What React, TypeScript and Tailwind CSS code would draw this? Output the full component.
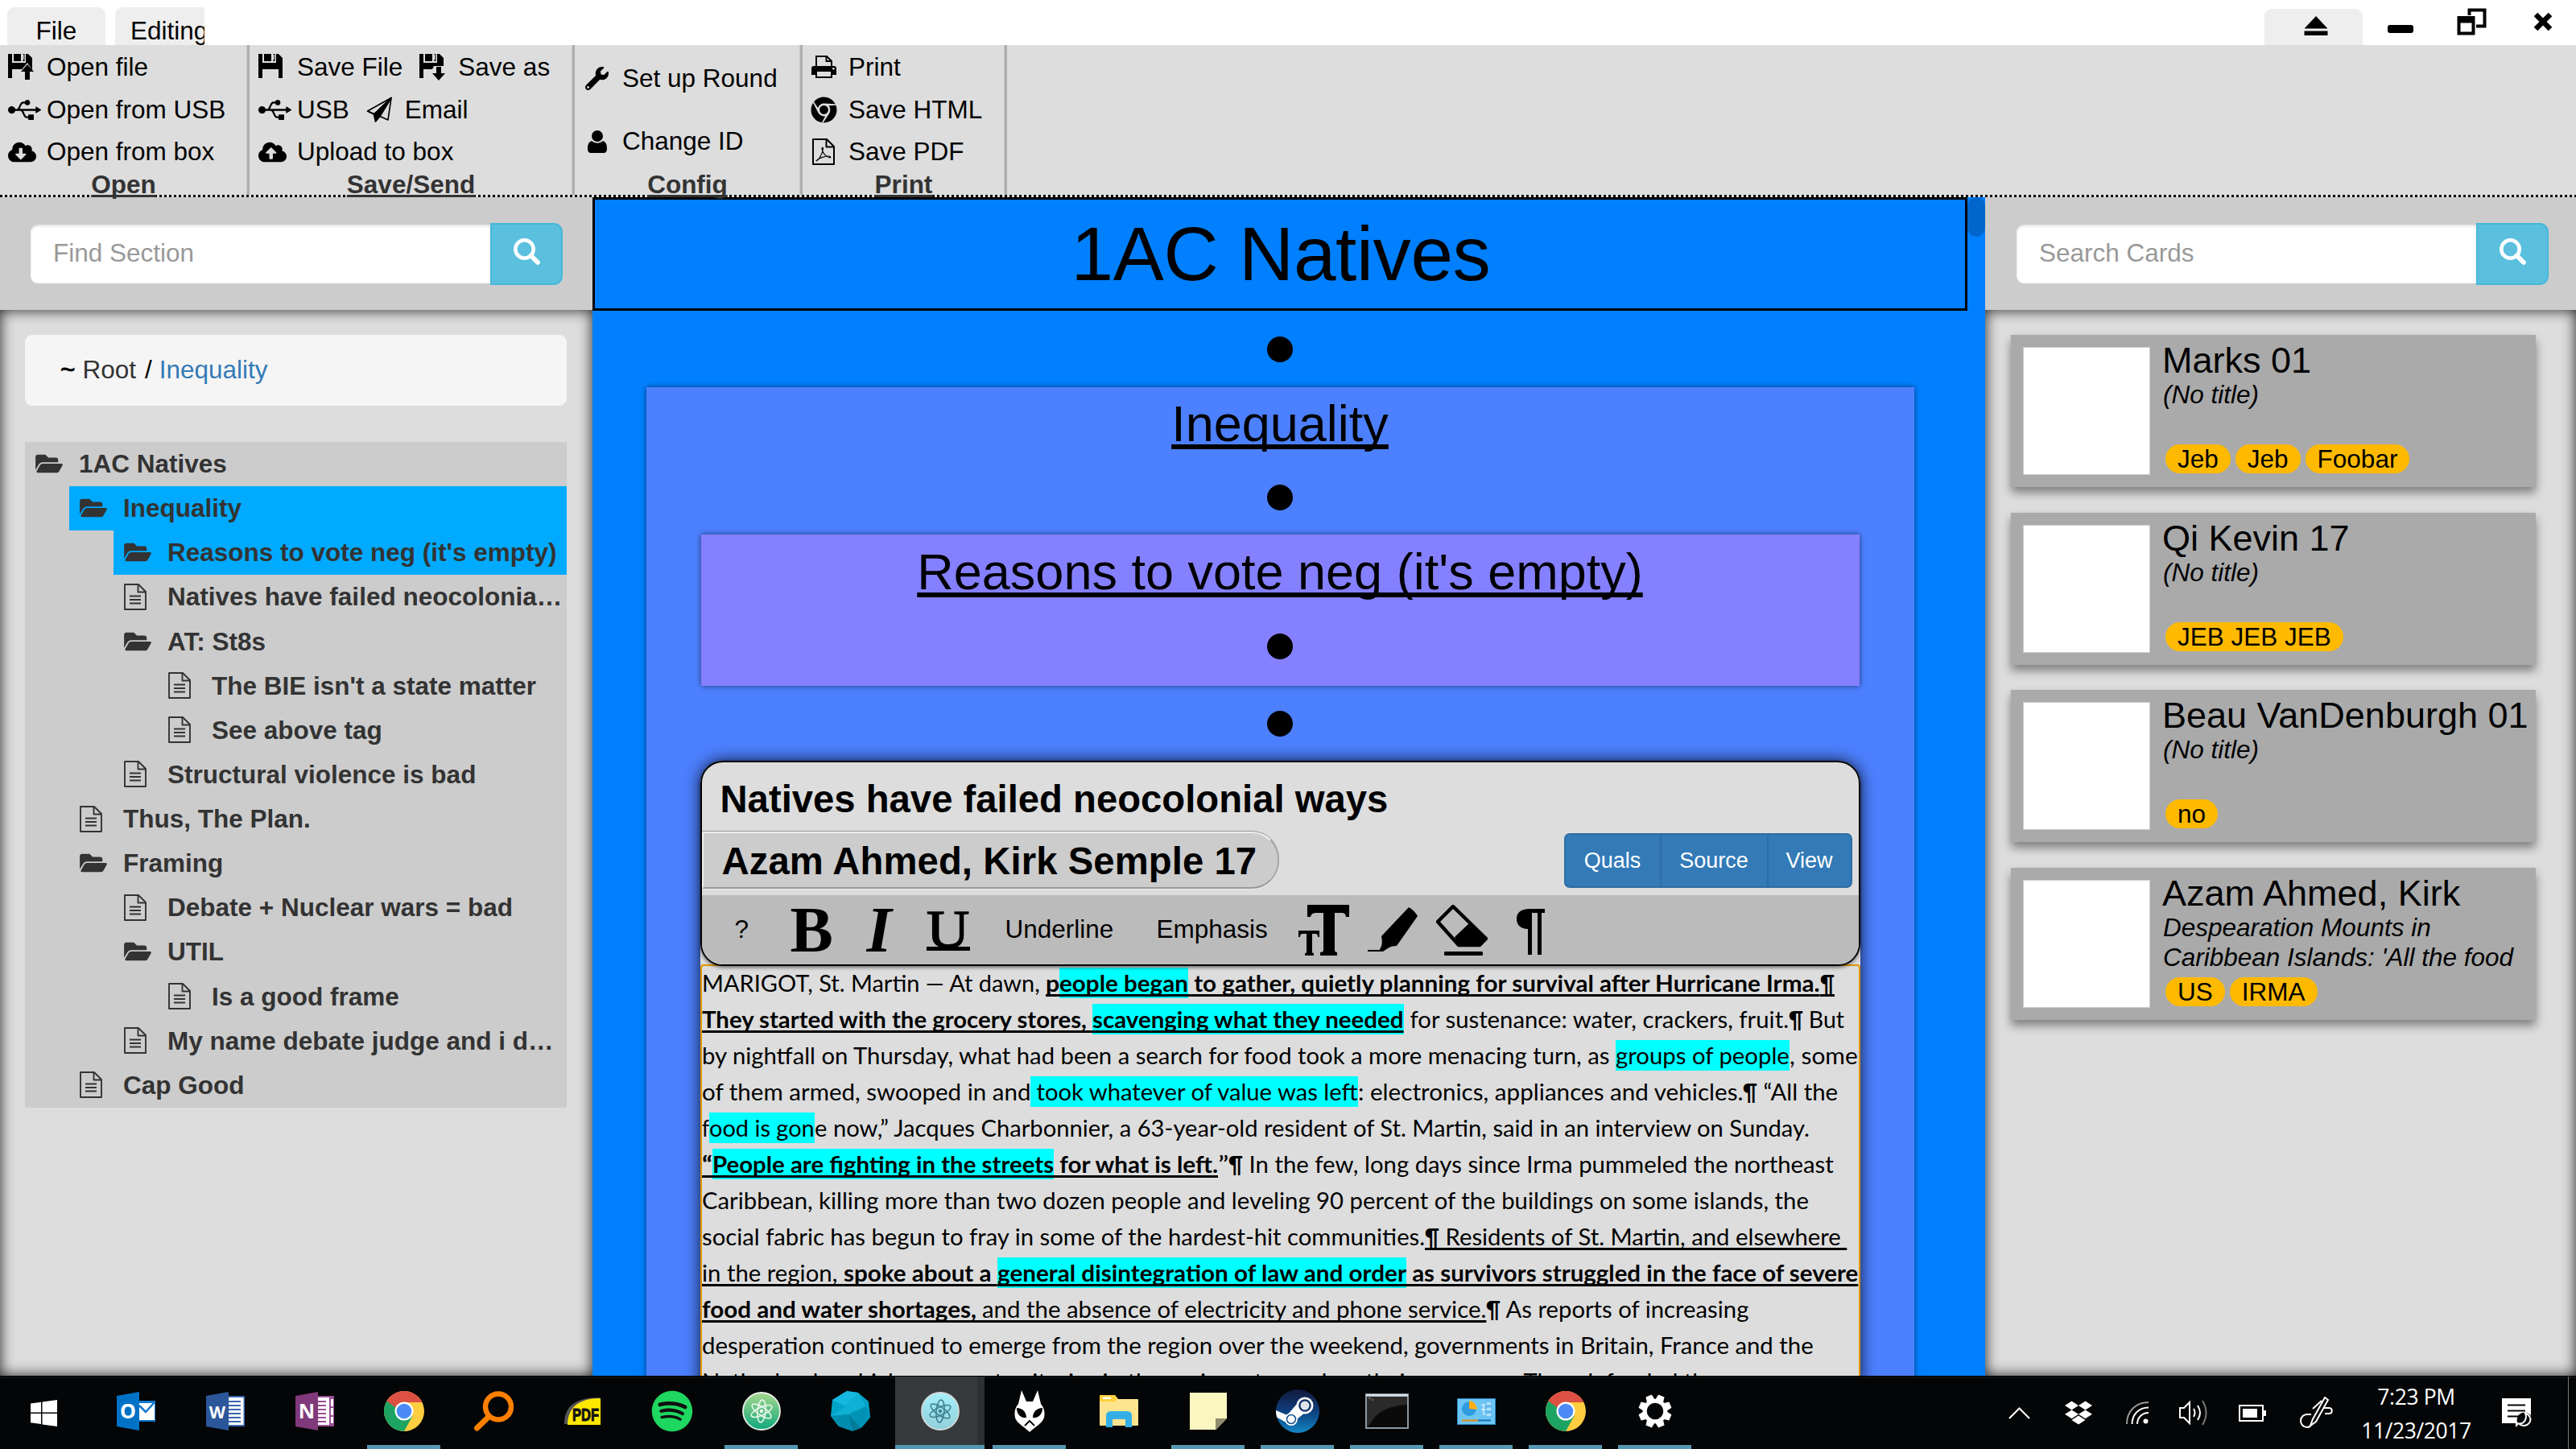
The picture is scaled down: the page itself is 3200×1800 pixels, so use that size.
import React, { useLayoutEffect, useRef, useState } from "react";
import { FaUsb, FaWrench, FaChrome, FaCloudDownloadAlt, FaCloudUploadAlt, FaFolderOpen, FaSpotify, FaDropbox } from "react-icons/fa";

/* ---------- ribbon icons ---------- */

function Floppy({ arrow }: { arrow?: "up" | "down" }) {
  return (
    <svg width="32" height="34" viewBox="0 0 32 34" fill="#000">
      <path d="M0 1h5v11h17V1h3l5 5v25h-5V20H5v11H0z" />
      <path d="M7 1h9v9H7z M18.500 1h2v9h-2z" />
      <path d="M17 2h2.500v6H17z" fill="#ddd" />
      {arrow === "up" && (
        <>
          <path d="M14 24l10-12 8 12v10H18z" fill="#ddd" />
          <path d="M24 14l8 9h-5v10h-6V23h-5z" />
        </>
      )}
      {arrow === "down" && (
        <>
          <path d="M14 24l4-8h14v16H17z" fill="#ddd" />
          <path d="M21 17h6v8h5l-8 9-8-9h5z" />
        </>
      )}
    </svg>
  );
}

function Plane() {
  return (
    <svg width="33" height="33" viewBox="0 0 33 33" fill="none" stroke="#000" strokeWidth="1.700" strokeLinejoin="round">
      <path d="M1.500 18L31 1.500 27 29l-10-4.500z" />
      <path d="M1.500 18l8 4L31 1.500" />
      <path d="M31 1.500L9.500 22l2 9 5.500-6.500z" fill="#000" />
    </svg>
  );
}

function PersonIcon() {
  return (
    <svg width="24" height="28" viewBox="0 0 24 28" fill="#000">
      <circle cx="12" cy="7" r="7" />
      <path d="M5 13c4 3.500 10 3.500 14 0 4 1.500 5 5 5 10 0 3-1.500 5-4 5H4c-2.500 0-4-2-4-5 0-5 1-8.500 5-10z" />
    </svg>
  );
}

function PrinterIcon() {
  return (
    <svg width="31" height="28" viewBox="0 0 31 28" fill="none" stroke="#000" strokeWidth="2">
      <path d="M6 14V1h13l6 6v7" />
      <path d="M18.500 1v6H25" />
      <path d="M3 13h25c2 0 3 1 3 3v8h-5v-4H5v4H0v-8c0-2 1-3 3-3z" fill="#000" stroke="none" />
      <circle cx="27.300" cy="16.300" r="1.300" fill="#ddd" stroke="none" />
      <path d="M6 20v7h19v-7" />
    </svg>
  );
}

function PdfIcon() {
  return (
    <svg width="28" height="33" viewBox="0 0 28 33" fill="none" stroke="#000" strokeWidth="2" strokeLinejoin="round">
      <path d="M1 1h17l9 9v22H1z" />
      <path d="M17.500 1v9.500H27" />
      <path d="M5 28c3-1 8-9 8.500-15.500.2-1.500-1.600-1.500-1.500.2C12.500 18 17 23 22 24c1.500-.500.500-2-1.500-2C16 22 9 24 6 27z" strokeWidth="1.200" />
    </svg>
  );
}

function DocIcon() {
  return (
    <svg width="28" height="33" viewBox="0 0 28 33" fill="none" stroke="#333" strokeWidth="1.900" strokeLinejoin="round">
      <path d="M1 1h17l9 9v22H1z" />
      <path d="M17.500 1v9.500H27" />
      <path d="M7 15.500h14M7 20h14M7 24.500h14" />
    </svg>
  );
}

function SearchIcon() {
  return (
    <svg width="33" height="33" viewBox="0 0 33 33" fill="none" stroke="#fff">
      <circle cx="13.500" cy="13.500" r="11.200" strokeWidth="4.600" />
      <path d="M21.500 21.500l8.500 8.500" strokeWidth="5.800" strokeLinecap="round" />
    </svg>
  );
}

/* ---------- ribbon ---------- */

function Item({ icon, label, iconW = "w-[48px]" }: { icon: React.ReactNode; label: string; iconW?: string }) {
  return (
    <div className="flex items-center whitespace-nowrap">
      <div className={`${iconW} flex shrink-0 items-center`}>{icon}</div>
      <span>{label}</span>
    </div>
  );
}

function Group({ label, width, children }: { label: string; width: string; children: React.ReactNode }) {
  return (
    <div className={`${width} flex h-[186px] shrink-0 flex-col border-r-[3px] border-[#afafaf] shadow-[inset_-1px_0_0_#c9c9c9]`}>
      <div className="flex h-[159px] flex-col pt-px">{children}</div>
      <div className="h-[27px] text-center font-bold leading-[29px] text-[#333] underline decoration-[3px] underline-offset-[2px] [text-decoration-skip-ink:none]">{label}</div>
    </div>
  );
}

function Row({ children, className = "" }: { children: React.ReactNode; className?: string }) {
  return <div className={`flex h-[52.5px] shrink-0 items-center ${className}`}>{children}</div>;
}

function Ribbon() {
  return (
    <div className="h-[189px] bg-[#ddd] text-[31.5px] text-black">
      <div className="relative z-10 flex h-[186px]">
        <Group label="Open" width="w-[310px]">
          <Row className="pl-[10px]"><Item icon={<Floppy arrow="up" />} label="Open file" /></Row>
          <Row className="pl-[10px] pt-px"><Item icon={<FaUsb className="h-[41px] w-[41px]" />} label="Open from USB" /></Row>
          <Row className="pl-[10px] pt-px"><Item icon={<FaCloudDownloadAlt className="h-[28px] w-[35px]" />} label="Open from box" /></Row>
        </Group>
        <Group label="Save/Send" width="w-[404px]">
          <Row className="pl-[11px]">
            <Item icon={<Floppy />} label="Save File" />
            <div className="w-[21px]" />
            <Item icon={<Floppy arrow="down" />} label="Save as" />
          </Row>
          <Row className="pl-[11px] pt-px">
            <Item icon={<FaUsb className="h-[41px] w-[41px]" />} label="USB" />
            <div className="w-[21px]" />
            <Item icon={<Plane />} label="Email" />
          </Row>
          <Row className="pl-[11px] pt-px"><Item icon={<FaCloudUploadAlt className="h-[28px] w-[35px]" />} label="Upload to box" /></Row>
        </Group>
        <Group label="Config" width="w-[283px]">
          <div className="flex h-[80px] items-center pl-[13px] pt-px"><Item iconW="w-[46px]" icon={<FaWrench className="h-[29px] w-[29px]" />} label="Set up Round" /></div>
          <div className="flex h-[78px] items-center pl-[16px]"><Item iconW="w-[43px]" icon={<PersonIcon />} label="Change ID" /></div>
        </Group>
        <Group label="Print" width="w-[254px]">
          <Row className="pl-[11px]"><Item iconW="w-[46px]" icon={<PrinterIcon />} label="Print" /></Row>
          <Row className="pl-[10px] pt-px"><Item iconW="w-[47px]" icon={<FaChrome className="h-[33px] w-[33px]" />} label="Save HTML" /></Row>
          <Row className="pl-[12px] pt-px"><Item iconW="w-[45px]" icon={<PdfIcon />} label="Save PDF" /></Row>
        </Group>
      </div>
      <div className="h-[3px] bg-[repeating-linear-gradient(90deg,#000_0_3px,#ddd_3px_6px)]" />
    </div>
  );
}

function TitleBar() {
  return (
    <div className="flex h-[56px] items-end bg-white text-[31.5px] text-black">
      <div className="ml-[9px] h-[47px] w-[122px] rounded-t-[9px] bg-[#eee] pt-[11px] text-center leading-[36px]">File</div>
      <div className="ml-[12px] h-[47px] w-[111px] overflow-hidden rounded-tl-[9px] bg-[#eee] pl-[19px] pt-[11px] leading-[36px]">Editing</div>
      <div className="ml-auto mr-[31px] flex h-[45px] w-[122px] justify-center rounded-t-[9px] bg-[#eee] pl-[5px] pt-[9px]">
        <svg width="30" height="24" viewBox="0 0 30 24"><path d="M15 0l14.500 15.500H.500z M.500 18.500h29V24H.500z" /></svg>
      </div>
      <div className="mb-[15px] mr-[54px] h-[10px] w-[32px] rounded-[3px] bg-black" />
      <svg className="mb-[12px] mr-[58px]" width="37" height="34" viewBox="0 0 37 34" fill="none" stroke="#000" strokeWidth="4">
        <path d="M15.500 9V2.500h19v20H24" />
        <path d="M2.500 12h18v19.500h-18z" />
        <path d="M2 14.500h19" strokeWidth="8" />
      </svg>
      <svg className="mb-[17px] mr-[29px]" width="24" height="24" viewBox="0 0 24 24" stroke="#000" strokeWidth="6.500">
        <path d="M3 3l18 18M21 3L3 21" />
      </svg>
    </div>
  );
}

/* ---------- side panels ---------- */

function SearchBar({ placeholder }: { placeholder: string }) {
  return (
    <div className="flex h-[140px] shrink-0 items-center bg-[#ccc]">
      <div className="flex h-[73px] w-[571px] items-center rounded-l-[9px] bg-white pl-[28px] pb-px text-[31.5px] text-[#999] shadow-[inset_0_2px_3px_rgba(0,0,0,0.12)]">{placeholder}</div>
      <div className="flex h-[77px] w-[90px] items-center justify-center rounded-r-[11px] border-2 border-[#46b8da] bg-[#5bc0de] pb-[5px]">
        <SearchIcon />
      </div>
    </div>
  );
}

const tree: { text: string; level: number; folder?: boolean; active?: boolean }[] = [
  { text: "1AC Natives", level: 0, folder: true },
  { text: "Inequality", level: 1, folder: true, active: true },
  { text: "Reasons to vote neg (it's empty)", level: 2, folder: true, active: true },
  { text: "Natives have failed neocolonia…", level: 2 },
  { text: "AT: St8s", level: 2, folder: true },
  { text: "The BIE isn't a state matter", level: 3 },
  { text: "See above tag", level: 3 },
  { text: "Structural violence is bad", level: 2 },
  { text: "Thus, The Plan.", level: 1 },
  { text: "Framing", level: 1, folder: true },
  { text: "Debate + Nuclear wars = bad", level: 2 },
  { text: "UTIL", level: 2, folder: true },
  { text: "Is a good frame", level: 3 },
  { text: "My name debate judge and i d…", level: 2 },
  { text: "Cap Good", level: 1 },
];

const indents = ["ml-0", "ml-[55px]", "ml-[110px]", "ml-[165px]"];

function LeftPanel() {
  return (
    <div className="flex h-full w-[736px] shrink-0 flex-col">
      <div className="bg-[#ccc] pl-[38px]"><SearchBar placeholder="Find Section" /></div>
      <div className="flex-1 bg-[#ddd] px-[31px] pt-[31px] shadow-[inset_0_0_17px_rgba(0,0,0,0.85)]">
        <div className="flex h-[88px] w-[673px] items-center whitespace-pre rounded-[9px] bg-[#f5f5f5] pl-[44px] text-[31.5px]">
          <span className="text-black [-webkit-text-stroke:0.8px_#000]">~</span>
          <span className="pl-[9px] text-[#333]">Root</span>
          <span className="pl-[11px] text-black">/</span>
          <span className="pl-[9px] text-[#337ab7]">Inequality</span>
        </div>
        <div className="mt-[45px] w-[673px] bg-[#ccc] text-[31.5px] font-bold text-[#333]">
          {tree.map((n, i) => (
            <div key={i} className={`${indents[n.level]} ${n.active ? "bg-[#00aaff]" : ""} flex h-[55.13px] items-center whitespace-nowrap pb-px pl-[13px]`}>
              <div className="flex w-[54px] shrink-0 items-center">
                {n.folder ? <FaFolderOpen className="h-[30px] w-[34px]" /> : <DocIcon />}
              </div>
              <span className="leading-[54px]">{n.text}</span>
            </div>
          ))}
        </div>
      </div>
    </div>
  );
}

const cards = [
  { title: "Marks 01", sub: "(No title)", tags: ["Jeb", "Jeb", "Foobar"] },
  { title: "Qi Kevin 17", sub: "(No title)", tags: ["JEB JEB JEB"] },
  { title: "Beau VanDenburgh 01", sub: "(No title)", tags: ["no"] },
  { title: "Azam Ahmed, Kirk", sub: "Despearation Mounts in Caribbean Islands: 'All the food", tags: ["US", "IRMA"] },
];

function RightPanel() {
  return (
    <div className="flex h-full w-[734px] shrink-0 flex-col">
      <div className="bg-[#ccc] pl-[39px]"><SearchBar placeholder="Search Cards" /></div>
      <div className="flex flex-1 flex-col gap-[31.6px] bg-[#ddd] pl-[32px] pt-[31px] shadow-[inset_0_0_17px_rgba(0,0,0,0.85)]">
        {cards.map((c) => (
          <div key={c.title} className="flex h-[189px] w-[652px] bg-[#aaa] pl-[15px] pt-[15px] text-black shadow-[0_7px_11px_rgba(0,0,0,0.42)]">
            <div className="h-[159px] w-[158px] shrink-0 border border-[#ccc] bg-white" />
            <div className="-mt-[15px] ml-[15px] w-[457px]">
              <div className="h-[56px] whitespace-nowrap pt-[3px] text-[45px] leading-[58px]">{c.title}</div>
              <div className="h-[79px] pl-px text-[31.5px] italic leading-[37px]">{c.sub}</div>
              <div className="mt-px flex gap-[6px] pl-[4px]">
                {c.tags.map((t, i) => (
                  <span key={i} className="h-[36px] rounded-[18px] bg-[#ffba00] px-[15px] text-[31.5px] leading-[36px]">{t}</span>
                ))}
              </div>
            </div>
          </div>
        ))}
      </div>
    </div>
  );
}

/* ---------- document ---------- */

type Run = { t: string; w: number; b?: boolean; u?: boolean; h?: boolean };

const lines: Run[][] = [
  [
    { t: "MARIGOT, St. Martin — At dawn, ", w: 427 },
    { t: "p", w: 17, b: true, u: true },
    { t: "eople began", w: 160, b: true, u: true, h: true },
    { t: " to gather, quietly planning for survival after Hurricane Irma.", w: 785, b: true, u: true },
    { t: "¶", w: 18, b: true, u: true },
  ],
  [
    { t: "They started with the grocery stores, ", w: 485, b: true, u: true },
    { t: "scavenging what they needed", w: 387, b: true, u: true, h: true },
    { t: " for sustenance: water, crackers, fruit.", w: 478 },
    { t: "¶", w: 18, b: true },
    { t: " But", w: 52 },
  ],
  [
    { t: "by nightfall on Thursday, what had been a search for food took a more menacing turn, as ", w: 1135 },
    { t: "groups of people", w: 216, h: true },
    { t: ", some", w: 85 },
  ],
  [
    { t: "of them armed, swooped in and", w: 408 },
    { t: " took whatever of value was left", w: 407, h: true },
    { t: ": electronics, appliances and vehicles.", w: 478 },
    { t: "¶", w: 18, b: true },
    { t: " “All the", w: 100 },
  ],
  [
    { t: "f", w: 9 },
    { t: "ood is gon", w: 131, h: true },
    { t: "e now,” Jacques Charbonnier, a 63-year-old resident of St. Martin, said in an interview on Sunday.", w: 1236 },
  ],
  [
    { t: "“", w: 13, b: true, u: true },
    { t: "People are fighting in the streets", w: 424, b: true, u: true, h: true },
    { t: " for what is left.", w: 204, b: true, u: true },
    { t: "”", w: 13 },
    { t: "¶", w: 18, b: true },
    { t: " In the few, long days since Irma pummeled the northeast", w: 734 },
  ],
  [{ t: "Caribbean, killing more than two dozen people and leveling 90 percent of the buildings on some islands, the", w: 1375 }],
  [
    { t: "social fabric has begun to fray in some of the hardest-hit communities.", w: 898 },
    { t: "¶", w: 18, b: true, u: true },
    { t: " Residents of St. Martin, and elsewhere ", w: 506, u: true },
  ],
  [
    { t: "in the region, ", w: 176, u: true },
    { t: "spoke about a ", w: 191, b: true, u: true },
    { t: "general disintegration of law and order", w: 508, b: true, u: true, h: true },
    { t: " as survivors struggled in the face of severe", w: 561, b: true, u: true },
  ],
  [
    { t: "food and water shortages, ", w: 348, b: true, u: true },
    { t: "and the absence of electricity and phone service.", w: 626, u: true },
    { t: "¶", w: 18, b: true },
    { t: " As reports of increasing", w: 308 },
  ],
  [{ t: "desperation continued to emerge from the region over the weekend, governments in Britain, France and the", w: 1381 }],
  [{ t: "Netherlands, which oversee territories in the region, stepped up their response. They defended the pace", w: 1330 }],
];

/* One styled run of text, stretched horizontally to its measured advance width. */
function TextRun({ run }: { run: Run }) {
  const ref = useRef<HTMLSpanElement>(null);
  const [scale, setScale] = useState(1);
  useLayoutEffect(() => {
    if (ref.current) setScale(run.w / ref.current.offsetWidth);
  }, [run.w]);
  return (
    <span className={`block h-[38px] shrink-0 ${run.h ? "bg-[#00ffff]" : ""}`} style={{ width: run.w }}>
      <span
        ref={ref}
        className={`inline-block origin-left whitespace-pre align-top leading-[38px] ${run.b ? "font-bold" : ""} ${
          run.u ? "underline decoration-[2.5px] underline-offset-[3px] [text-decoration-skip-ink:none]" : ""
        }`}
        style={{ transform: `scaleX(${scale})` }}
      >
        {run.t}
      </span>
    </span>
  );
}

function FormatBar() {
  return (
    <div className="flex h-[86px] items-center bg-[#bbb] text-[31.5px] text-black">
      <span className="ml-[41px] w-[69px]">?</span>
      <span className="w-[95px] font-['Liberation_Serif',serif] text-[80px] font-bold leading-[76px]">B</span>
      <span className="w-[74px] font-['Liberation_Serif',serif] text-[80px] font-bold italic leading-[76px]">I</span>
      <span className="flex w-[98px] flex-col">
        <span className="-mt-[3px] h-[50px] origin-left scale-x-110 font-['Liberation_Serif',serif] text-[67px] leading-[56px] [-webkit-text-stroke:1.5px_#000]">U</span>
        <span className="h-[5px] w-[54px] bg-black" />
      </span>
      <span className="w-[188px]">Underline</span>
      <span className="w-[176px]">Emphasis</span>
      <svg className="mr-[22px] shrink-0" width="64" height="63" viewBox="0 0 64 63">
        <path d="M11 0h52v15h-4c-.500-4-2-5-6-5h-8v46c0 2 1 3 3 3v4H27v-4c3 0 4-1 4-3V10h-8c-5 0-7 1-8 5h-4z" />
        <path d="M0 32h26v8h-2c0-3-1-4-3-4h-4v22c0 1.500.500 2 2 2v3H8v-3c1.500 0 2-.500 2-2V36H6c-3 0-4 1-4 4H0z" />
      </svg>
      <svg className="mr-[21px] shrink-0" width="64" height="58" viewBox="0 0 64 58">
        <path d="M51 1c4 2 9 7 11 11L36 49c-5 0-8 1-11 3l-6 4h-6c4-5 6-9 4-19z" />
        <path d="M0 54h14v2H0z" />
      </svg>
      <svg className="mr-[36px] shrink-0" width="64" height="63" viewBox="0 0 64 63">
        <path d="M21 2L2 21l26 29h26l8-8z" fill="none" stroke="#000" strokeWidth="4.500" strokeLinejoin="round" />
        <path d="M41 23l22 19-8 10H28L23 40z" />
        <rect x="10" y="58" width="48" height="5" rx="1.500" />
      </svg>
      <svg className="mt-[4px] shrink-0" width="36" height="57" viewBox="0 0 36 57">
        <path d="M16 0h19v5h-4v52h-5V5h-7v52h-5V25C5 25 0 20 0 12.500S5 0 16 0z" />
      </svg>
    </div>
  );
}

function Dot({ h }: { h: string }) {
  return (
    <div className={`${h} flex items-center justify-center`}>
      <div className="h-[32px] w-[32px] rounded-full bg-black" />
    </div>
  );
}

function Article() {
  return (
    <div className="mx-auto w-[1441px] rounded-t-[28px] bg-[#ddd] shadow-[0_0_20px_rgba(0,0,0,0.8)]">
      <div className="relative z-10 h-[255px] overflow-hidden rounded-[28px] border-2 border-black bg-[#ddd] text-black shadow-[0_2px_4px_rgba(0,0,0,0.5)]">
        <div className="h-[86px] pl-[23px] pt-[16px] text-[47.25px] font-bold leading-[60px]">Natives have failed neocolonial ways</div>
        <div className="flex h-[79px] items-start justify-between">
          <div className="flex h-[71px] w-[717px] items-center whitespace-nowrap rounded-r-[34px] border-2 border-b-[#999] border-l-[#eee] border-r-[#aaa] border-t-[#eee] bg-[#ccc] pl-[23px] pt-[3px] text-[47.25px] font-bold tracking-[0.08px] shadow-[0_-1px_0_#999,0_1px_0_#eee]">
            Azam Ahmed, Kirk Semple 17
          </div>
          <div className="mr-[8px] mt-[2px] flex h-[68px] w-[358px] rounded-[7px] border-2 border-[#2e6da4] bg-[#337ab7] text-[27px] leading-[64px] text-white">
            <div className="w-[119px] border-r-2 border-[#2e6da4] text-center">Quals</div>
            <div className="w-[133px] border-r-2 border-[#2e6da4] text-center">Source</div>
            <div className="flex-1 text-center">View</div>
          </div>
        </div>
        <FormatBar />
      </div>
      <div className="-mt-[2px] h-[620px] rounded-t-[4px] border-2 border-[#e59700] font-['Lato',sans-serif] text-[28.5px] text-black">
        <div className="-mt-[2px]">
          {lines.map((l, i) => (
            <div key={i} className="flex h-[45px] items-center">
              {l.map((r, j) => (
                <TextRun key={j} run={r} />
              ))}
            </div>
          ))}
        </div>
      </div>
    </div>
  );
}

function Center() {
  return (
    <div className="flex h-full w-[1730px] shrink-0 bg-[#0080ff] text-black">
      <div className="w-[1708px] overflow-hidden">
        <div className="h-[141px] border-[3px] border-black pl-[2px] text-center text-[94.5px] leading-[134px] tracking-[-0.4px]">1AC Natives</div>
        <Dot h="h-[95px]" />
        <div className="mx-auto h-[1300px] w-[1575px] bg-[#4d80ff] shadow-[0_0_7px_rgba(0,0,0,0.55)]">
          <div className="h-[90px] text-center text-[63px] leading-[90px] underline [text-decoration-skip-ink:none]">Inequality</div>
          <Dot h="h-[93px]" />
          <div className="mx-auto h-[188px] w-[1439px] bg-[#8580ff] shadow-[0_0_7px_rgba(0,0,0,0.55)]">
            <div className="h-[90px] text-center text-[63px] leading-[92px] underline [text-decoration-skip-ink:none]">Reasons to vote neg (it's empty)</div>
            <Dot h="h-[98px]" />
          </div>
          <Dot h="h-[93px]" />
          <Article />
        </div>
      </div>
      <div className="h-[49px] w-[22px] rounded-[11px] bg-[#0066cc]" />
    </div>
  );
}

/* ---------- taskbar ---------- */

function Office({ letter, main, dark, kind }: { letter: string; main: string; dark: string; kind: "mail" | "doc" | "note" }) {
  return (
    <svg width="48" height="48" viewBox="0 0 48 48">
      {kind === "mail" && (
        <>
          <rect x="26" y="11" width="22" height="26" fill={main} />
          <path d="M27 14h20v21H27z" fill="#fff" />
          <path d="M28 17l8 8 11-12" fill="none" stroke={main} strokeWidth="2.500" />
        </>
      )}
      {kind === "doc" && (
        <>
          <rect x="26" y="5" width="22" height="38" rx="1" fill={main} />
          <rect x="27" y="7" width="19.500" height="34" fill="#fff" />
          <path d="M28 12h15M28 17h15M28 22h15M28 27h15M28 32h15M28 37h15" stroke={main} strokeWidth="2" />
        </>
      )}
      {kind === "note" && (
        <>
          <rect x="26" y="5" width="22" height="38" rx="1" fill={main} />
          <path d="M27 7h15v34H27zM44 9h3v9h-3zM44 20h3v9h-3zM44 31h3v8h-3z" fill="#fff" />
          <path d="M28 12h10M28 17h10M28 22h10M28 27h10M28 32h10M28 37h10" stroke={main} strokeWidth="2" />
        </>
      )}
      <path d="M0 5L28 0v48L0 43z" fill={dark} />
      <text x="14" y="33" textAnchor="middle" fill="#fff" fontFamily="Open Sans, sans-serif" fontWeight="700" fontSize={letter === "W" ? 21 : 25}>{letter}</text>
    </svg>
  );
}

function ChromeLogo() {
  return (
    <svg width="50" height="50" viewBox="0 0 50 50">
      <circle cx="25" cy="25" r="25" fill="#ffcd40" />
      <path d="M25 25L3.300 12.500A25 25 0 0 0 25 50l10.500-19z" fill="#1da462" />
      <path d="M3.300 12.500L15 32l10-7z" fill="#1da462" />
      <path d="M3.300 12.500A25 25 0 0 1 47.400 14H25L14 22z" fill="#dd5144" />
      <path d="M3.300 12.500L14 31V20z" fill="#1da462" />
      <circle cx="25" cy="25" r="11.500" fill="#fff" />
      <circle cx="25" cy="25" r="9.300" fill="#4c8bf5" />
    </svg>
  );
}

function OrbitLogo({ ring, from, to, line }: { ring: string; from: string; to: string; line: string }) {
  const id = "orbit" + line.slice(1);
  return (
    <svg width="48" height="48" viewBox="0 0 48 48" fill="none" stroke={line} strokeWidth="1.500">
      <defs>
        <linearGradient id={id} x1="0" y1="0" x2="0" y2="1">
          <stop offset="0" stopColor={from} />
          <stop offset="1" stopColor={to} />
        </linearGradient>
      </defs>
      <circle cx="24" cy="24" r="23" fill={`url(#${id})`} stroke={ring} strokeWidth="1.800" />
      <ellipse cx="24" cy="24" rx="5" ry="14" transform="rotate(5 24 24)" />
      <ellipse cx="24" cy="24" rx="5" ry="14" transform="rotate(65 24 24)" />
      <ellipse cx="24" cy="24" rx="5" ry="14" transform="rotate(125 24 24)" />
      <circle cx="24" cy="24" r="1.500" fill={line} />
    </svg>
  );
}

const apps: { icon: React.ReactNode; open?: boolean; active?: boolean }[] = [
  { icon: <Office letter="O" main="#0f78d0" dark="#0072c6" kind="mail" /> },
  { icon: <Office letter="W" main="#3a66b0" dark="#2b579a" kind="doc" /> },
  { icon: <Office letter="N" main="#9a4f93" dark="#80397b" kind="note" /> },
  { icon: <ChromeLogo />, open: true },
  {
    icon: (
      <svg width="50" height="50" viewBox="0 0 50 50" fill="none" stroke="#ff7f00">
        <circle cx="31" cy="19.500" r="16" strokeWidth="6.500" />
        <path d="M19 32L4.500 46" strokeWidth="7" strokeLinecap="round" />
      </svg>
    ),
  },
  {
    icon: (
      <svg width="46" height="34" viewBox="0 0 46 34">
        <path d="M0 33C0 12 12 0 44 0L6 33z" fill="#555" />
        <path d="M4 34C4 14 16 1 45 1v33z" fill="#ffe800" />
        <text x="10" y="29" fontFamily="Liberation Sans, sans-serif" fontWeight="700" fontSize="22" textLength="33" lengthAdjust="spacingAndGlyphs" fill="#111" stroke="#111" strokeWidth="1">PDF</text>
      </svg>
    ),
  },
  {
    icon: (
      <div className="rounded-full bg-[#101010]">
        <FaSpotify className="h-[52px] w-[52px] text-[#1ed760]" />
      </div>
    ),
  },
  { icon: <OrbitLogo ring="#e8f0ea" from="#a8d88e" to="#0ea97c" line="#eef8ee" />, open: true },
  {
    icon: (
      <svg width="50" height="50" viewBox="0 0 50 50">
        <path d="M20 0l14 2 13 11 2 19-12 13-11 4-17-6L0 31 2 11z" fill="#00a3c7" />
        <path d="M20 0L2 11l16 8 16-17z" fill="#14b8de" />
        <path d="M18 19L0 31l22-2 22-10-10-17z" fill="#0eb0d4" />
        <path d="M22 29l22-10 5 14-11 13z" fill="#0093b5" />
        <path d="M0 31l22-2 5 21-17-6z" fill="#008dad" />
        <path d="M22 29l16 17-11 4z" fill="#007b98" />
      </svg>
    ),
  },
  { icon: <OrbitLogo ring="#d5d9da" from="#a5f0fa" to="#90cfda" line="#3d7f8c" />, open: true, active: true },
  {
    icon: (
      <svg width="40" height="52" viewBox="0 0 40 52">
        <path d="M10 0l6 14h8l6-14 4 17c5 6 5 12 4 17-2 7-12 12-18 18C14 46 4 41 2 34 1 29 1 23 6 17z" fill="#fff" />
        <path d="M4 22c6 0 12 4 12 12C9 35 4 30 4 22zM36 22c-6 0-12 4-12 12 7 1 12-4 12-12z" fill="#000" />
        <path d="M14 44l6-6 6 6" fill="none" stroke="#000" strokeWidth="1.800" />
      </svg>
    ),
    open: true,
  },
  {
    icon: (
      <svg width="48" height="42" viewBox="0 0 48 42">
        <path d="M0 2q0-1 1-1h18l4 5h24q1 0 1 1v31q0 1-1 1H1q-1 0-1-1z" fill="#ffe48f" />
        <path d="M0 2q0-1 1-1h18l3 4-3 4H0z" fill="#ffcf3c" />
        <path d="M4 3.500h10v2.500H4z" fill="#fff" />
        <path d="M8 41V26q0-4 5-5h22q5 1 5 5v15h-8V31H16v10z" fill="#35b0e6" />
      </svg>
    ),
  },
  {
    icon: (
      <svg width="46" height="46" viewBox="0 0 46 46">
        <path d="M0 0h46v32L32 46H0z" fill="#fbf6c0" />
        <path d="M32 32h14L33 46h-1z" fill="#8f8d6b" />
      </svg>
    ),
    open: true,
  },
  {
    icon: (
      <div className="h-[54px] w-[54px] overflow-hidden rounded-full bg-linear-to-b from-[#101a3c] via-[#0d3f7e] to-[#1487c4]">
        <svg width="54" height="54" viewBox="0 0 54 54">
          <path d="M0 26l14 6 12-14 10-8 10 11-20 16-8 7-18-10z" fill="#fff" />
          <circle cx="36" cy="20" r="10.500" fill="#fff" />
          <circle cx="36" cy="20" r="7.800" fill="#0d2f66" />
          <circle cx="36" cy="20" r="5.500" fill="#dfe3ea" />
          <circle cx="19" cy="37" r="8" fill="#fff" />
          <circle cx="19" cy="37" r="5.500" fill="none" stroke="#0f4e90" strokeWidth="1.500" />
        </svg>
      </div>
    ),
    open: true,
  },
  {
    icon: (
      <svg width="54" height="44" viewBox="0 0 54 44">
        <path d="M0 0h54v44H0z" fill="#8b98a3" />
        <path d="M1 1h52v2.500H1z" fill="#d5dde4" />
        <path d="M2 4h50v38H2z" fill="#0a0a0a" />
        <path d="M2 4h50v10Q16 16 6 38L2 42z" fill="#2a2a2a" />
        <path d="M4 6h3M8 8h2" stroke="#aaa" />
      </svg>
    ),
    open: true,
  },
  {
    icon: (
      <svg width="48" height="33" viewBox="0 0 48 33">
        <rect x=".500" y=".500" width="47" height="32" fill="#6cc6f5" stroke="#2b86c4" />
        <circle cx="15" cy="13" r="9" fill="#2f9be0" />
        <path d="M15 13V3a10 10 0 0 1 9.500 11z" fill="#ffae17" />
        <path d="M30 8h7M30 14h7M33 8v12h4" stroke="#fff" fill="none" />
        <path d="M36 4h7v5h-7zM36 11h7v5h-7zM36 18h7v5h-7z" fill="#a9e1fd" stroke="#3f9fd8" strokeWidth=".700" />
        <path d="M6 27.500h20" stroke="#e9890c" strokeWidth="2" />
        <path d="M26 27.500h16" stroke="#1c6fb0" strokeWidth="2" />
      </svg>
    ),
    open: true,
  },
  { icon: <ChromeLogo />, open: true },
  {
    icon: (
      <svg width="42" height="42" viewBox="-21 -21 42 42">
        {[0, 45, 90, 135, 180, 225, 270, 315].map((a) => (
          <path key={a} d="M-4 -20.500h8l1.500 9h-11z" fill="#fff" transform={`rotate(${a + 22.5})`} />
        ))}
        <circle r="12.800" fill="none" stroke="#fff" strokeWidth="5" />
      </svg>
    ),
    open: true,
  },
];

function Taskbar() {
  return (
    <div className="flex h-[91px] items-stretch border-t border-black bg-[#030506] shadow-[inset_0_2px_0_#101213]">
      <div className="flex w-[113px] shrink-0 items-center pl-[38px]">
        <svg width="33" height="33" viewBox="0 0 33 33" fill="#fff">
          <path d="M0 4.500L13 2.700V15.500H0zM14.500 2.500L33 0v15.500H14.500zM0 17h13v13L0 28.200zM14.500 17H33v16l-18.500-2.500z" />
        </svg>
      </div>
      {apps.map((a, i) => (
        <div key={i} className={`${a.active ? "bg-[#373a3b] shadow-[inset_-9px_0_0_#2d3031]" : ""} flex w-[111px] shrink-0 flex-col items-center`}>
          <div className="flex h-[85px] items-center pt-px">{a.icon}</div>
          {a.open && <div className={`${a.active ? "w-full" : "w-[91px]"} h-[5px] bg-[#5398b3]`} />}
        </div>
      ))}
      <div className="ml-auto flex items-center text-white">
        <svg className="mr-[43px]" width="27" height="15" viewBox="0 0 27 15" fill="none" stroke="#fff" strokeWidth="2"><path d="M1 14L13.500 1.500 26 14" /></svg>
        <FaDropbox className="mr-[42px] h-[34px] w-[34px]" />
        <svg className="mr-[38px]" width="28" height="28" viewBox="0 0 28 28" fill="none" stroke="#fff" strokeWidth="2">
          <path d="M1 28C1 12 12 1 28 1" stroke="#999" />
          <path d="M7.500 28C7.500 16 16 7.500 28 7.500" />
          <path d="M14 28c0-8 6-14 14-14" />
          <circle cx="24.500" cy="24.500" r="3" fill="#fff" stroke="none" />
        </svg>
        <svg className="mr-[38px]" width="36" height="34" viewBox="0 0 36 34" fill="none" stroke="#fff" strokeWidth="2">
          <path d="M1 11h5l7-7v26l-7-7H1z" />
          <path d="M18 12q3 5 0 10" />
          <path d="M23 8q6 9 0 18" />
          <path d="M29 2q9 15 0 30" stroke="#777" />
        </svg>
        <svg className="mr-[42px]" width="34" height="21" viewBox="0 0 34 21">
          <path d="M1 1h29v19H1z" fill="none" stroke="#fff" strokeWidth="2" />
          <path d="M5 5h18v11H5zM31 7h3v7h-3z" fill="#fff" />
        </svg>
        <svg className="mr-[34px]" width="41" height="41" viewBox="0 0 41 41" fill="none" stroke="#fff" strokeWidth="2">
          <path d="M13 36l3-8L31 1l4 3-15 27z" />
          <path d="M16 15L27 5" />
          <path d="M14 22H9c-5 0-8 4-8 8s3 8 8 8c3 0 4-1 5-3" />
          <path d="M29 14h7c5 0 5 7 0 7h-5" />
        </svg>
        <div className="mt-[2px] w-[139px] whitespace-nowrap text-center font-['Open_Sans',sans-serif] text-[26.5px] leading-[42px] tracking-[-0.4px]">
          <div>7:23 PM</div>
          <div>11/23/2017</div>
        </div>
        <svg className="ml-[37px] mr-[45px]" width="37" height="36" viewBox="0 0 37 36">
          <path d="M0 0h36v31H22l-5 5v-5H0z" fill="#fff" />
          <path d="M7 8.500h22M7 15.500h22M7 22.500h14" stroke="#05080a" strokeWidth="2" />
          <circle cx="28" cy="27" r="9.500" fill="#05080a" />
          <path d="M29 18.500c6 2 8 8 5 12s-9 5-13 1c6 1 11-6 8-13z" fill="#05080a" stroke="#fff" strokeWidth="2" />
        </svg>
        <div className="mr-[9px] h-[90px] w-px bg-[#777]" />
      </div>
    </div>
  );
}

export default function App() {
  return (
    <div className="flex h-[1800px] w-[3200px] flex-col overflow-hidden bg-[#ddd] font-['Liberation_Sans',Arial,sans-serif]">
      <TitleBar />
      <Ribbon />
      <div className="flex h-[1464px] overflow-hidden">
        <LeftPanel />
        <Center />
        <RightPanel />
      </div>
      <Taskbar />
    </div>
  );
}
